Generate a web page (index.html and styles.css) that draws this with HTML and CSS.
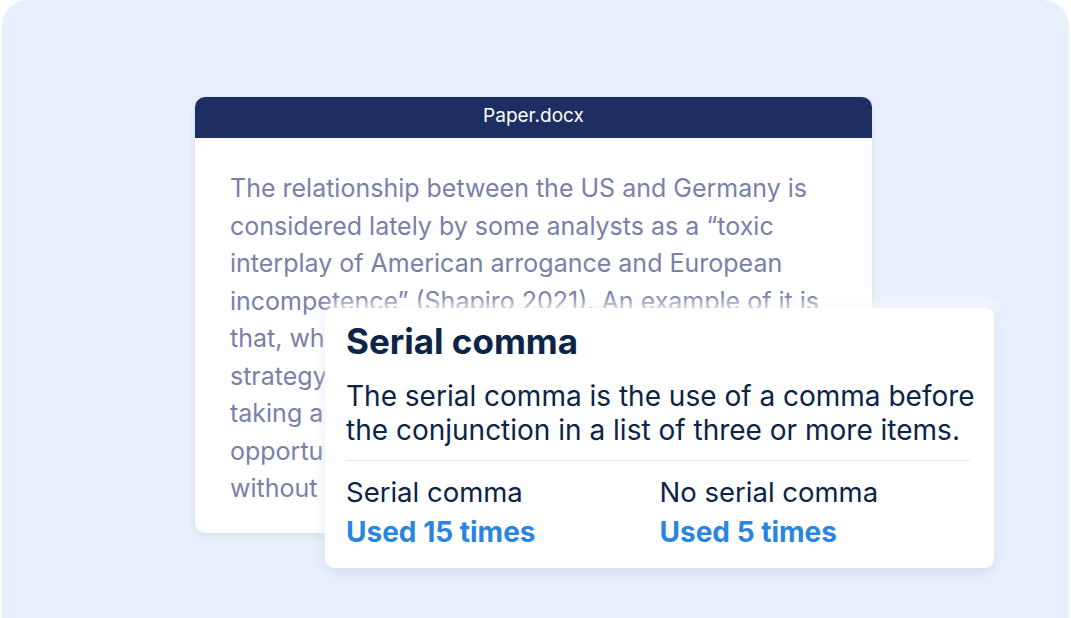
FILE: index.html
```html
<!DOCTYPE html>
<html>
<head>
<meta charset="utf-8">
<link rel="stylesheet" href="styles.css">
</head>
<body>
<div class="panel">
  <div class="doc">
    <div class="doc-head">Paper.docx</div>
    <div class="doc-body">
      <p class="line">The relationship between the US and Germany is</p>
      <p class="line">considered lately by some analysts as a “toxic</p>
      <p class="line">interplay of American arrogance and European</p>
      <p class="line">incompetence” (Shapiro 2021). An example of it is</p>
      <p class="line">that, while the US is pursuing its own</p>
      <p class="line">strategy in the region, Germany keeps</p>
      <p class="line">taking a cautious stance and missing</p>
      <p class="line">opportunities to act on its interests</p>
      <p class="line">without a clear plan.</p>
    </div>
    <div class="tip">
      <h2 class="tip-title">Serial comma</h2>
      <p class="tip-desc">The serial comma is the use of a comma before<br>the conjunction in a list of three or more items.</p>
      <div class="tip-stats">
        <div class="stat">
          <div class="stat-label">Serial comma</div>
          <div class="stat-value">Used 15 times</div>
        </div>
        <div class="stat">
          <div class="stat-label">No serial comma</div>
          <div class="stat-value">Used 5 times</div>
        </div>
      </div>
    </div>
  </div>
</div>
</body>
</html>
```
FILE: styles.css
```css
html, body {
  margin: 0;
  padding: 0;
  background: #ffffff;
  font-family: Inter, "Noto Sans", sans-serif;
}
.panel {
  margin: 0 2px;
  height: 618px;
  background: #e8f1fb;
  border-radius: 26px 26px 0 0;
  padding: 97px 0 0 193px;
  box-sizing: border-box;
  overflow: hidden;
}
.doc {
  position: relative;
  width: 677px;
  height: 436px;
  background: #ffffff;
  border-radius: 10px;
  box-shadow: 0 3px 8px rgba(40, 70, 130, 0.10);
}
.doc-head {
  height: 41px;
  background: #1f2e62;
  border-radius: 10px 10px 0 0;
  color: #ffffff;
  font-size: 19px;
  line-height: 38px;
  text-align: center;
}
.doc-body {
  padding: 32px 20px 0 35px;
}
.line {
  margin: 0;
  white-space: nowrap;
  font-size: 25px;
  line-height: 37.5px;
  color: #7a80a7;
}
.tip {
  position: absolute;
  left: 130px;
  top: 211px;
  width: 669px;
  height: 260px;
  box-sizing: border-box;
  background: #ffffff;
  border-radius: 9px;
  padding: 12px 21px 0 21px;
  box-shadow: 0 4px 14px rgba(40, 70, 130, 0.12), 0 -6px 10px rgba(255, 255, 255, 0.7);
}
.tip-title {
  margin: 0;
  font-size: 35px;
  line-height: 42px;
  font-weight: 700;
  color: #0b2447;
}
.tip-desc {
  margin: 17px 3px 0 0;
  font-size: 28px;
  line-height: 34px;
  color: #0b2447;
  padding-bottom: 13px;
  border-bottom: 1px solid #e6e9ef;
  white-space: nowrap;
}
.tip-stats {
  display: flex;
  padding-top: 11px;
}
.stat {
  width: 314px;
}
.stat-label {
  font-size: 27.5px;
  line-height: 40px;
  color: #0b2447;
}
.stat-value {
  font-size: 28px;
  line-height: 41px;
  font-weight: 700;
  color: #2a85de;
}
```
